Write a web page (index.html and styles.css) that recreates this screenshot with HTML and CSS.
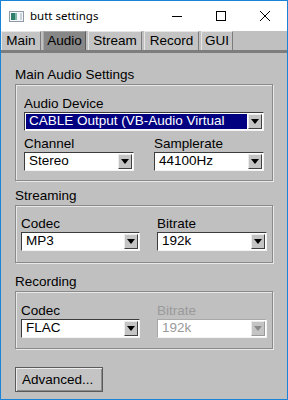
FILE: index.html
```html
<!DOCTYPE html>
<html lang="en">
<head>
    <meta charset="UTF-8">
    <title>butt settings</title>
    <link rel="stylesheet" href="styles.css">
</head>
<body>
    <div class="window">
        <div class="titlebar">
            <svg class="app-icon" width="15" height="11" viewBox="0 0 15 11">
                <rect x="0.5" y="0.5" width="14" height="10" fill="#f4f6f8" stroke="#8f9aa6"/>
                <rect x="2" y="2" width="4" height="7" fill="#2f7d6a"/>
                <rect x="6" y="2" width="2" height="7" fill="#7fb8a8"/>
                <rect x="11" y="2" width="2" height="7" fill="#c9d3dc"/>
            </svg>
            <span class="title">butt settings</span>
            <div class="caption">
                <span class="cap-btn">
                    <svg width="10" height="10" viewBox="0 0 10 10"><path d="M0 5.5H10" stroke="#000" stroke-width="1"/></svg>
                </span>
                <span class="cap-btn">
                    <svg width="10" height="10" viewBox="0 0 10 10"><rect x="0.5" y="0.5" width="9" height="9" fill="none" stroke="#000"/></svg>
                </span>
                <span class="cap-btn">
                    <svg width="10" height="10" viewBox="0 0 10 10"><path d="M0 0L10 10M10 0L0 10" stroke="#000" stroke-width="1"/></svg>
                </span>
            </div>
        </div>

        <div class="tabs">
            <span class="tab tab-main">Main</span>
            <span class="tab tab-audio active">Audio</span>
            <span class="tab tab-stream">Stream</span>
            <span class="tab tab-record">Record</span>
            <span class="tab tab-gui">GUI</span>
        </div>
        <div class="tab-band"></div>

        <div class="panel">
            <div class="group-label label-main">Main Audio Settings</div>
            <div class="group group-main">
                <div class="field">
                    <div class="field-label">Audio Device</div>
                    <div class="choice choice-wide focused">
                        <span class="value">CABLE Output (VB-Audio Virtual</span>
                        <span class="arrow"></span>
                    </div>
                </div>
                <div class="row row-main">
                    <div class="field">
                        <div class="field-label">Channel</div>
                        <div class="choice choice-small">
                            <span class="value">Stereo</span>
                            <span class="arrow"></span>
                        </div>
                    </div>
                    <div class="field">
                        <div class="field-label">Samplerate</div>
                        <div class="choice choice-small">
                            <span class="value">44100Hz</span>
                            <span class="arrow"></span>
                        </div>
                    </div>
                </div>
            </div>

            <div class="group-label label-stream">Streaming</div>
            <div class="group group-codec">
                <div class="row row-codec">
                    <div class="field">
                        <div class="field-label">Codec</div>
                        <div class="choice choice-codec">
                            <span class="value">MP3</span>
                            <span class="arrow"></span>
                        </div>
                    </div>
                    <div class="field">
                        <div class="field-label">Bitrate</div>
                        <div class="choice choice-small">
                            <span class="value">192k</span>
                            <span class="arrow"></span>
                        </div>
                    </div>
                </div>
            </div>

            <div class="group-label label-record">Recording</div>
            <div class="group group-codec group-record">
                <div class="row row-codec">
                    <div class="field">
                        <div class="field-label">Codec</div>
                        <div class="choice choice-codec">
                            <span class="value">FLAC</span>
                            <span class="arrow"></span>
                        </div>
                    </div>
                    <div class="field disabled">
                        <div class="field-label">Bitrate</div>
                        <div class="choice choice-small">
                            <span class="value">192k</span>
                            <span class="arrow"></span>
                        </div>
                    </div>
                </div>
            </div>

            <button class="advanced">Advanced...</button>
        </div>
    </div>
</body>
</html>
```

FILE: styles.css
```css
body {
    margin: 0;
    font-family: "Liberation Sans", Arial, sans-serif;
    font-size: 13.5px;
    color: #000;
    background: #fff;
}

.window {
    width: 288px;
    height: 400px;
    box-sizing: border-box;
    border: 1px solid #1883d7;
    background: #c0c0c0;
    overflow: hidden;
}

/* title bar */
.titlebar {
    height: 30px;
    background: #fff;
    display: flex;
    align-items: center;
}

.app-icon {
    margin-left: 8px;
    margin-top: 0;
}

.title {
    margin-left: 6px;
    font-family: "Noto Sans", sans-serif;
    font-size: 11.5px;
    margin-top: -1px;
}

.caption {
    margin-left: auto;
    display: flex;
}

.cap-btn {
    width: 44px;
    height: 30px;
    display: flex;
    align-items: center;
    justify-content: center;
}

.cap-btn svg {
    display: block;
}

/* tabs */
.tabs {
    height: 19px;
    display: flex;
    padding-left: 0;
}

.tab {
    box-sizing: border-box;
    height: 19px;
    padding-top: 1px;
    line-height: 16px;
    text-align: center;
    background: #c4c4c4;
    border-top: 1px solid #e6e6e6;
    border-left: 1px solid #e6e6e6;
    border-right: 1px solid #7c7c7c;
}

.tab.active {
    background: #878787;
    border-top-color: #a8a8a8;
    border-left-color: #a8a8a8;
    border-right-color: #5c5c5c;
}

.tab-main { width: 40px; }
.tab-audio { width: 43px; margin-left: 2px; }
.tab-stream { width: 54px; margin-left: 2px; }
.tab-record { width: 55px; margin-left: 2px; }
.tab-gui { width: 32px; margin-left: 2px; }

.tab-band {
    height: 3px;
    background: #7d7d7d;
}

/* panel */
.panel {
    padding-left: 14px;
}

.group-label {
    height: 17px;
    line-height: 16px;
}

.label-main { margin-top: 14px; }
.label-stream { margin-top: 7px; }
.label-record { margin-top: 11px; }

.group {
    box-sizing: border-box;
    width: 258px;
    border: 1px solid #8a8a8a;
    box-shadow: inset 1px 1px 0 #e8e8e8, 1px 1px 0 #e8e8e8;
}

.group-main {
    height: 97px;
    padding: 11px 0 0 8px;
}

.group-codec {
    height: 58px;
    padding: 10px 0 0 5px;
}

.group-record {
    padding-top: 11px;
}

.field-label {
    height: 16px;
    line-height: 16px;
}

.row {
    display: flex;
}

.row-main {
    margin-top: 5px;
    gap: 20px;
}

.row-codec {
    gap: 17px;
}

/* choice widget */
.choice {
    box-sizing: border-box;
    height: 19px;
    display: flex;
    align-items: stretch;
    background: #fff;
    border-top: 1px solid #3c3c3c;
    border-left: 1px solid #3c3c3c;
    border-bottom: 1px solid #f4f4f4;
    border-right: 1px solid #f4f4f4;
}

.choice-wide { width: 240px; }
.choice-small { width: 110px; }
.choice-codec { width: 119px; }

.value {
    flex: 1;
    margin: 1px 0 1px 1px;
    padding-left: 3px;
    line-height: 14px;
    white-space: nowrap;
    overflow: hidden;
}

.focused .value {
    background: #000080;
    color: #fff;
}

.arrow {
    box-sizing: border-box;
    width: 14px;
    margin: 1px 1px 1px 1px;
    background: #c4c4c4;
    border-top: 1px solid #ececec;
    border-left: 1px solid #ececec;
    border-right: 1px solid #404040;
    border-bottom: 1px solid #404040;
    position: relative;
}

.arrow::after {
    content: "";
    position: absolute;
    left: 2px;
    top: 4px;
    border-left: 4px solid transparent;
    border-right: 4px solid transparent;
    border-top: 5px solid #000;
}

.disabled .field-label,
.disabled .value {
    color: #9a9a9a;
}

.disabled .choice {
    border-color: #a8a8a8 #f4f4f4 #f4f4f4 #a8a8a8;
}

.disabled .arrow {
    border-right-color: #9a9a9a;
    border-bottom-color: #9a9a9a;
}

.disabled .arrow::after {
    border-top-color: #8a8a8a;
}

/* button */
.advanced {
    display: block;
    box-sizing: border-box;
    width: 88px;
    height: 25px;
    margin-top: 18px;
    padding: 0 0 0 6px;
    text-align: left;
    font-family: inherit;
    font-size: 13.5px;
    color: #000;
    background: #c4c4c4;
    border: 1px solid #5a5a5a;
    box-shadow: inset 1px 1px 0 #ededed, inset -1px -1px 0 #8c8c8c;
}
```
